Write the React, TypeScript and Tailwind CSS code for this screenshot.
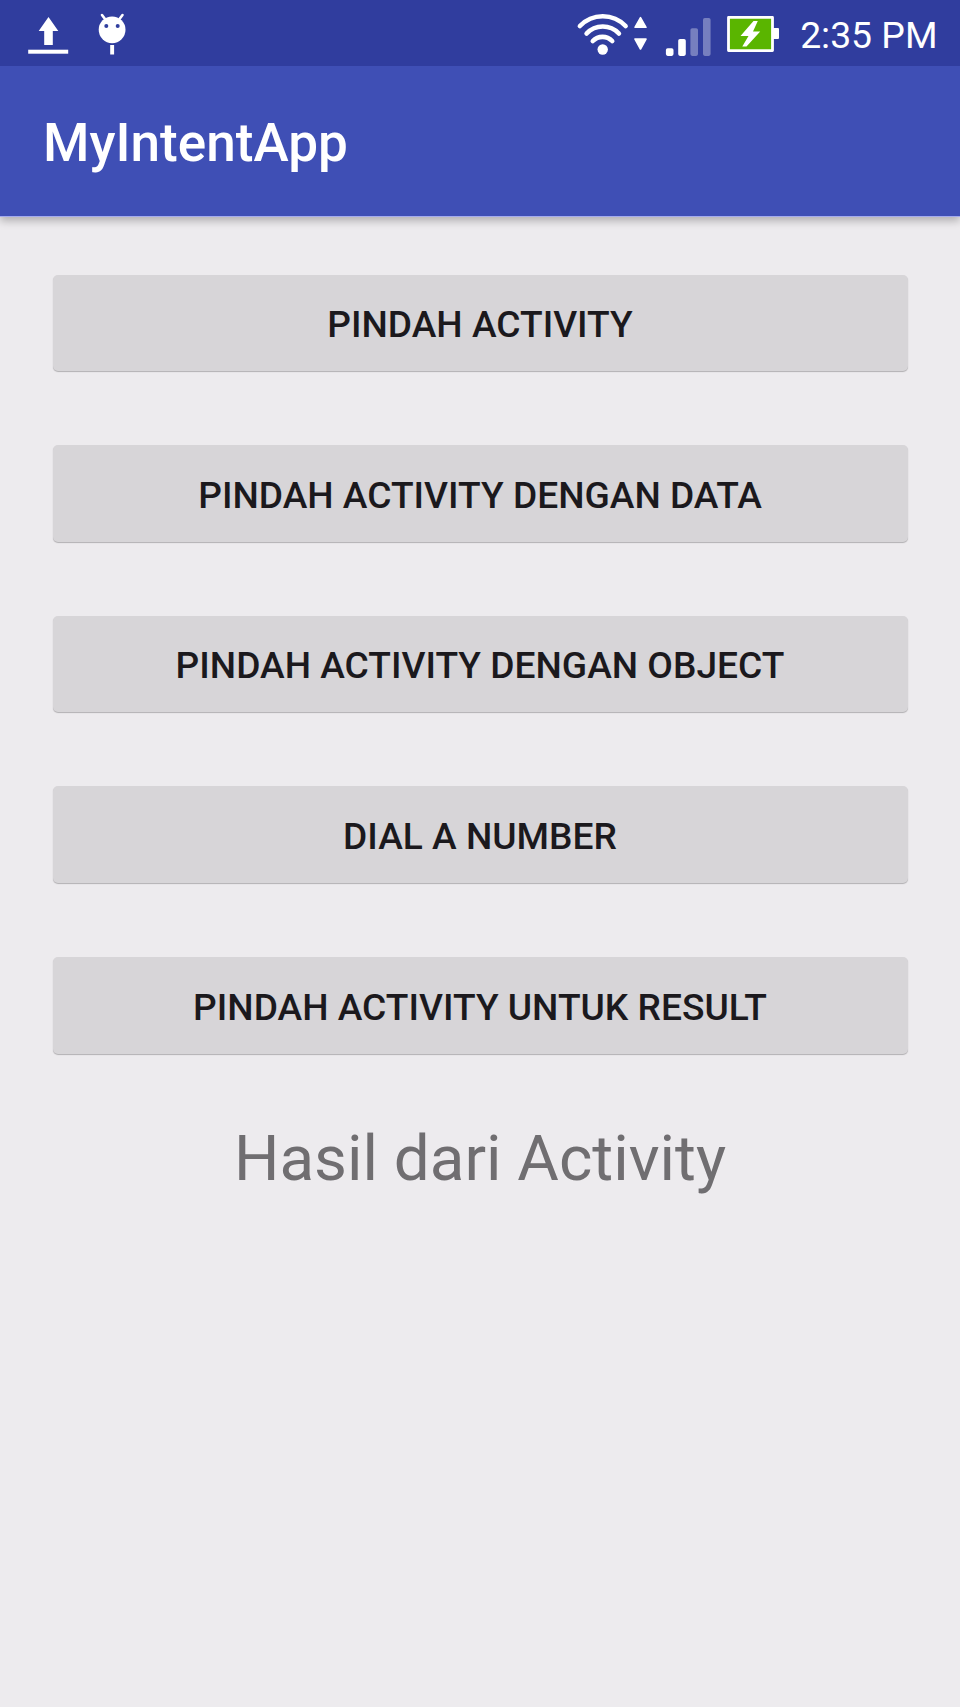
const actions = [
  'Pindah Activity',
  'Pindah Activity dengan Data',
  'Pindah Activity dengan Object',
  'Dial a Number',
  'Pindah Activity untuk Result',
];

function NotificationIcons() {
  return (
    <svg width="130" height="66" viewBox="0 0 130 66" fill="#fff" aria-hidden="true">
      <path d="M48.5 17 58.3 31H52.8V45H44.2V31H38.7Z" />
      <rect x="28.2" y="49.7" width="40" height="4" />
      <path d="M102 15 105 19M122.5 15 119.5 19" stroke="#fff" strokeWidth="2.6" strokeLinecap="round" />
      <circle cx="112.1" cy="29.8" r="13.4" />
      <circle cx="106.3" cy="26" r="2" fill="#303f9f" />
      <circle cx="117.7" cy="26" r="2" fill="#303f9f" />
      <rect x="110.2" y="45" width="3.9" height="9.5" />
    </svg>
  );
}

function SystemIcons() {
  return (
    <svg width="210" height="66" viewBox="570 0 210 66" fill="#fff" aria-hidden="true">
      <g fill="none" stroke="#fff" strokeWidth="4.6" strokeLinecap="round">
        <path d="M579.9 26A31.5 31.5 0 0 1 625.6 26" />
        <path d="M586.6 33.5A22 22 0 0 1 618.9 33.5" />
        <path d="M592.8 41A13.5 13.5 0 0 1 612.2 41" />
      </g>
      <circle cx="602.7" cy="49.5" r="5.2" />
      <path d="M640.5 17.7 646 27.3H635ZM635 39H646L640.5 49Z" stroke="#fff" strokeWidth="1.6" strokeLinejoin="round" />
      <rect x="665.9" y="48.3" width="7.6" height="7.6" rx="1.8" />
      <rect x="678.2" y="39" width="7.6" height="16.9" rx="1.8" />
      <rect x="690.4" y="28.3" width="7.6" height="27.6" rx="1.8" fillOpacity=".34" />
      <rect x="703" y="18" width="7.6" height="37.9" rx="1.8" fillOpacity=".34" />
      <rect x="772" y="28" width="7" height="11" rx="1" />
      <rect x="728.5" y="17.4" width="44" height="33.2" fill="#5ab500" stroke="#fff" strokeWidth="2.8" strokeLinejoin="round" />
      <path d="M753.5 21 740.5 36H748.5L742.3 46.5H746.5L760.2 31.5H753L757.8 21Z" />
    </svg>
  );
}

export default function App() {
  return (
    <div className="flex h-[1707px] w-[960px] flex-col overflow-hidden bg-[#edebee] font-['Roboto',sans-serif]">
      <header className="z-10 bg-[#3f4fb5] shadow-[0_4px_8px_rgba(0,0,0,0.25)]">
        <div className="flex h-[66px] justify-between bg-[#303d9e] text-white">
          <NotificationIcons />
          <div className="flex pr-[22.5px]">
            <SystemIcons />
            <time className="ml-[20.5px] pt-[2px] text-[37.33px] leading-[66px] whitespace-nowrap">2:35 PM</time>
          </div>
        </div>
        <div className="flex h-[151px] items-center border-b border-[#a4abee] pt-[6px] pl-[43px]">
          <h1 className="text-[53.1px] font-medium text-white">MyIntentApp</h1>
        </div>
      </header>
      <main className="flex flex-col items-center px-[52.5px] pt-[57.5px]">
        <div className="flex w-full flex-col gap-[74.17px]">
          {actions.map((label) => (
            <button
              key={label}
              className="h-[96.5px] w-full rounded-[5px] bg-[#d7d5d8] pt-[4px] text-[37.15px] font-medium text-[#1b191d] uppercase shadow-[0_1px_1px_rgba(0,0,0,0.25)]"
            >
              {label}
            </button>
          ))}
        </div>
        <p className="mt-[67px] text-[63.75px] leading-[75px] text-[#706e71]">Hasil dari Activity</p>
      </main>
    </div>
  );
}
